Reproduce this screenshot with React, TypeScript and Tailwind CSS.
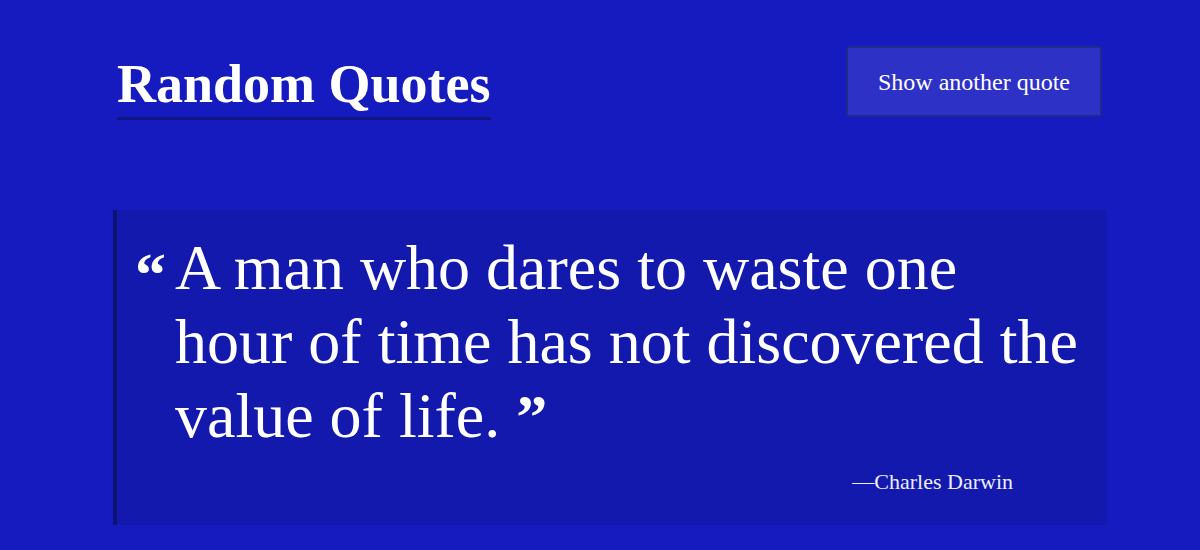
import React from "react";

export default function App() {
  const serif = { fontFamily: '"Liberation Serif", "DejaVu Serif", serif' };
  return (
    <div className="min-h-screen w-full bg-[#151bbf] text-white" style={serif}>
      <div className="ml-[113px] w-[994px] pt-[46px]">
        <header className="flex items-start justify-between">
          <h1 className="ml-[4px] mt-[11px] border-b-[3px] border-[#111680] pb-[6px] text-[54px] font-bold leading-none">
            Random Quotes
          </h1>
          <button className="mr-[5px] flex h-[71px] w-[256px] items-center justify-center rounded-[3px] border-2 border-[#1f2a8c] bg-[#2e31c6] text-[24px] leading-none text-white">
            Show another quote
          </button>
        </header>

        <blockquote className="mt-[90px] border-l-4 border-[#0e1275] bg-[#1419ae] pb-[32px] pt-[21px]">
          <div className="flex pl-[18px] pr-[20px]">
            <span className="mt-[12px] w-[40px] shrink-0 text-[62px] font-bold leading-none">“</span>
            <p className="text-[64px] leading-[74px]">
              A man who dares to waste one
              <br />
              hour of time has not discovered the
              <br />
              value of life. <span className="text-[62px] font-bold">”</span>
            </p>
          </div>
          <p className="mt-[18px] pr-[94px] text-right text-[22px] leading-none text-[#eceefb]">
            —Charles Darwin
          </p>
        </blockquote>
      </div>
    </div>
  );
}
